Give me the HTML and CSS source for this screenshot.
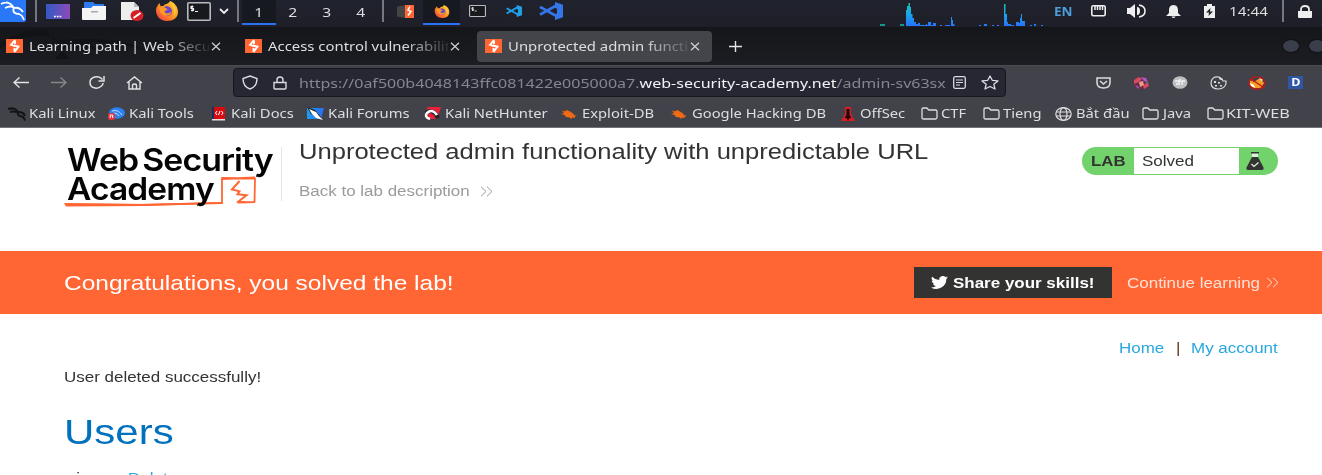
FILE: index.html
```html
<!DOCTYPE html>
<html lang="en">
<head>
<meta charset="utf-8">
<title>Unprotected admin functionality with unpredictable URL</title>
<link rel="stylesheet" href="styles.css">
</head>
<body>
<svg class="defs" aria-hidden="true">
  <defs>
    <linearGradient id="blue" x1="0" x2="1"><stop offset="0" stop-color="#1b9df0"/><stop offset="1" stop-color="#2a6cf5"/></linearGradient>
    <linearGradient id="violet" x1="0" x2="1"><stop offset="0" stop-color="#3459c4"/><stop offset="1" stop-color="#8b4bb8"/></linearGradient>
    <linearGradient id="load" x1="0" y1="0" x2="0" y2="1"><stop offset="0" stop-color="#14c8a8"/><stop offset=".4" stop-color="#18a8e8"/><stop offset="1" stop-color="#2a66ff"/></linearGradient>
    <linearGradient id="flame" x1="1" y1="0" x2="0" y2="1"><stop offset="0" stop-color="#ffd83a"/><stop offset=".5" stop-color="#ff9420"/><stop offset="1" stop-color="#f0304c"/></linearGradient>
  </defs>
  <symbol id="burp" viewBox="0 0 17 14" preserveAspectRatio="none"><path fill="#ff6633" d="M0 0h17v14H0z"/><path fill="none" stroke="#fff" stroke-width="1.900" d="M9 1L5 5.800l4 1.400M8 6.500l4.500 1L8.500 13M9 1.500v3.500M8.500 9v4"/></symbol>
  <symbol id="x" viewBox="0 0 10 9" preserveAspectRatio="none"><path stroke="#d2d2d4" stroke-width="1.200" d="M1 .8l8 7.400M9 .8L1 8.200"/></symbol>
  <symbol id="fox" viewBox="0 0 24 20" preserveAspectRatio="none"><path fill="url(#flame)" d="M1 9C1 6 3 4 4.500 2l1 3h3C10 2 13 4 15 0c5 2 8 6 8 11 0 6-5 9-11 9S1 16 1 9z"/><path fill="#6b46c8" d="M9 6c4-2 9 1 8 6-1 3-7 4-9 1-2-2-2-5 1-7z"/><path fill="#ff9a26" d="M4 6l5 0 4 2.500c-2 0-2 2-4 2 2 3 5 2 8 0-1 5-10 6-12 0z"/><path fill="#ffd440" d="M15 1c6 4 7 9 4 14 1-5 0-10-4-14z"/></symbol>
  <symbol id="term" viewBox="0 0 24 19" preserveAspectRatio="none"><rect x=".8" y=".8" width="22.400" height="17.400" rx="1" fill="#17191c" stroke="#b9babd" stroke-width="1.600"/><path fill="none" stroke="#eee" stroke-width="1.200" d="M6.500 4.500H4v2h2.500v2H4M5.200 3.500v6M8 9.500h3"/></symbol>
  <symbol id="code" viewBox="0 0 24 20" preserveAspectRatio="none"><path fill="none" stroke="currentColor" stroke-width="3" d="M1 5.500L18 16M1 14L18 3.500"/><path fill="currentColor" d="M16 0l8 3v14l-8 3V13.500l2-1V7.500l-2-1z"/></symbol>
  <symbol id="folder" viewBox="0 0 17 13" preserveAspectRatio="none"><path fill="none" stroke="#dedee0" stroke-width="1.300" d="M1 10.500V2.300Q1 1 2.500 1h3.300l2 2h6.700Q16 3 16 4.300v6.200q0 1.500-1.500 1.500h-12Q1 12 1 10.500z"/></symbol>
  <symbol id="bug" viewBox="0 0 16 10" preserveAspectRatio="none"><path fill="#f06a14" d="M1 1.500l3 1L6 1l3 1.500 3 2 1 1.500 3 1-2.500.5L14 9l-3-.5-.5 1.500-2-1.500L5 8 3.500 6 0 5l3-.8z"/></symbol>
  <symbol id="dragon" viewBox="0 0 18 14" preserveAspectRatio="none"><path fill="none" stroke="currentColor" stroke-width="2" d="M0 2c5-2 8 0 10 3 2 0 5 0 7 3M2 5c3-1 6 0 8 0-1 3 1 4 4 4.500 2 .5 2 2 3 4M1 1.500l3 .5M12 5c3 1 3 1 5 4"/></symbol>
  <symbol id="more" viewBox="0 0 13 11" preserveAspectRatio="none"><path fill="none" stroke="currentColor" d="M1 .7l5 4.800-5 4.800M7 .7l5 4.800-5 4.800"/></symbol>
</svg>

<div class="panel">
  <svg class="kali" viewBox="0 0 26 22"><path fill="#2878f8" d="M0 0h26v20q0 2-2 2H0z"/><path fill="none" stroke="#fff" stroke-width="1.800" d="M1 4c6-3 10-1 13 4 4-1 7 1 9 4M5 8c4-2 7-2 9 0-2 4 1 6 5 6 3 1 4 3 5 6M6 2l5 2"/></svg>
  <i class="sep"></i>
  <svg width="24" height="15" viewBox="0 0 24 15"><path fill="url(#violet)" d="M0 0h24v15H0z"/><path stroke="#fff" stroke-width="1.300" stroke-dasharray="1.800 1" d="M8 12.500h8"/></svg>
  <svg width="24" height="18" viewBox="0 0 24 18"><path fill="#2d7bf0" d="M2 0h9l2 2h9v8H2z"/><path fill="#f4f4f4" d="M0 6h9l2-2h13v13q0 1-1 1H1q-1 0-1-1z"/><path fill="#aaa" d="M9 9h7v1.500H9z"/></svg>
  <svg width="23" height="20" viewBox="0 0 23 20"><path fill="#ededed" d="M0 1h13l5 5v13H0z"/><path fill="#bbb" d="M13 1v5h5z"/><ellipse cx="16" cy="14.500" rx="6.500" ry="5.500" fill="#d42024"/><path stroke="#fff" stroke-width="2" d="M12.500 17l7-5"/></svg>
  <svg width="24" height="20"><use href="#fox"/></svg>
  <svg width="24" height="19"><use href="#term"/></svg>
  <svg width="10" height="6" viewBox="0 0 10 6"><path fill="none" stroke="#eee" stroke-width="1.800" d="M1 1l4 4 4-4"/></svg>
  <i class="sep"></i>
  <b class="space on"><span class="t">1</span></b>
  <b class="space"><span class="t">2</span></b>
  <b class="space"><span class="t">3</span></b>
  <b class="space"><span class="t">4</span></b>
  <i class="sep"></i>
  <svg width="17" height="13" viewBox="0 0 17 13"><path fill="#444" d="M0 1.500L9 0v13l-9-1.500z"/><path fill="#ff6633" d="M8 0h9v13H8z"/><path fill="none" stroke="#fff" stroke-width="1.500" d="M13 1.500l-2 3.500 3 1.500-3 4"/></svg>
  <b class="space on task"><svg width="16" height="13"><use href="#fox"/></svg></b>
  <svg width="17" height="12"><use href="#term"/></svg>
  <svg class="cyan" width="16" height="12"><use href="#code"/></svg>
  <svg class="azure" width="24" height="18"><use href="#code"/></svg>
  <svg class="graph" width="164" height="24" viewBox="0 0 164 24"><path fill="url(#load)" d="M26 24V8h1V4h1.500V1H30v4h1v7h1.500v4H34v4h2v2h2v-1h2v2h6v-1h1v1h1v-3h3v3h2v-2h3v3h4v-1h2v1h3v-1h5v1h1v-9h1v3h1v4h1.500v2H90v2h5v1zM124 24V2h1.500v10H127v8h1v2h3v1h3v1h2v-4h3v1h1v-5h1v-4h1v7h3v5h1v3zM99 23h2v1h-2zM104 22h3v2h-3zM112 23h2v1h-2zM117 23h2v1h-2zM150 23h2v1h-2zM154 22h2v2h-2zM161 23h2v1h-2z"/><path fill="#13998a" d="M0 22h5v2H0zM20 22h4v2h-4z"/></svg>
  <span class="t lang">EN</span>
  <svg width="15" height="12" viewBox="0 0 15 12"><rect x=".8" y=".8" width="13.400" height="10" rx="1.500" fill="none" stroke="#eee" stroke-width="1.600"/><path stroke="#eee" stroke-width="1.500" d="M4 1v4M6.500 1v4M9 1v4M11.500 1v4"/></svg>
  <svg width="19" height="14" viewBox="0 0 19 14"><path fill="#eee" d="M0 4h3l5-4v14L3 10H0zM10 3q3 0 3 4t-3 4z"/><path fill="none" stroke="#eee" stroke-width="1.600" d="M12 1q6 1 6 6t-6 6"/></svg>
  <svg width="15" height="13" viewBox="0 0 15 13"><path fill="#eee" d="M7.500 0C4 0 3 3 3 5v3l-3 3h15l-3-3V5c0-2-1-5-4.500-5zM5.500 11.500h4q-.5 1.500-2 1.500t-2-1.500z"/></svg>
  <svg width="11" height="14" viewBox="0 0 11 14"><path fill="#eee" d="M0 2h3V0h5v2h3v12H0z"/><path fill="#1f212b" d="M6.500 4L2 8.500h3L4.500 12 9 7.500H6z"/></svg>
  <span class="t clock">14:44</span>
  <i class="sep"></i>
  <svg width="14" height="13" viewBox="0 0 14 13"><path fill="#eee" d="M0 6h14v6q0 1-1 1H1q-1 0-1-1z"/><path fill="none" stroke="#eee" stroke-width="1.800" d="M3 6V4.500Q3 1 7 1t4 3.500V6"/></svg>
</div>

<div class="tabs">
  <svg class="wing" viewBox="0 0 190 38"><path fill="#121317" d="M0 16C20 4 38 1 46 2l8 11 32-1c30 0 50 5 62 13-22-8-40-10-60-10l12 10-16-6 3 9-18-12-14 16h14l-16-23C30 8 18 10 0 22z"/></svg>
  <div class="tab"><svg width="17" height="14"><use href="#burp"/></svg><div class="fade"><span class="t">Learning path | Web Secur</span></div><svg width="10" height="9"><use href="#x"/></svg></div>
  <div class="tab"><svg width="17" height="14"><use href="#burp"/></svg><div class="fade"><span class="t">Access control vulnerabilit</span></div><svg width="10" height="9"><use href="#x"/></svg></div>
  <div class="tab current"><svg width="17" height="14"><use href="#burp"/></svg><div class="fade"><span class="t">Unprotected admin functi</span></div><svg width="10" height="9"><use href="#x"/></svg></div>
  <svg class="plus" width="13" height="11" viewBox="0 0 13 11"><path stroke="#e4e4e6" stroke-width="1.400" d="M0 5.500h13M6.500 0v11"/></svg>
  <i class="dot"></i><i class="dot"></i>
</div>

<div class="tools">
  <svg width="16" height="11" viewBox="0 0 16 11"><path fill="none" stroke="#e2e2e4" stroke-width="1.400" d="M16 5.500H1M6.500 .5L1 5.500l5.500 5"/></svg>
  <svg width="16" height="11" viewBox="0 0 16 11"><path fill="none" stroke="#85868b" stroke-width="1.400" d="M0 5.500h15M9.500 .5l5.500 5-5.500 5"/></svg>
  <svg width="16" height="13" viewBox="0 0 16 13"><path fill="none" stroke="#e2e2e4" stroke-width="1.500" d="M13.500 3.500C9-1.500 1 1 1 6.500S8 14 12.500 10q1.500-1.500 1.700-3M15 0v5H9.500"/></svg>
  <svg width="17" height="14" viewBox="0 0 17 14"><path fill="none" stroke="#e2e2e4" stroke-width="1.400" d="M1 7l7.500-6L16 7M3 6v7h11V6M6.500 13V9.500q0-1.500 2-1.500t2 1.500V13"/></svg>
  <div class="url">
    <svg width="16" height="15" viewBox="0 0 16 15"><path fill="none" stroke="#dcdce0" stroke-width="1.400" d="M8 1l7 2.500C15 9 12.500 12.500 8 14 3.500 12.500 1 9 1 3.500z"/></svg>
    <svg width="14" height="14" viewBox="0 0 14 14"><path fill="none" stroke="#dcdce0" stroke-width="1.400" d="M1 6.500h12V12q0 1-1 1H2q-1 0-1-1zM4 6.500V4q0-3 3-3t3 3v2.500"/></svg>
    <span class="t">https://0af500b4048143ffc081422e005000a7.<em>web-security-academy.net</em>/admin-sv63sx</span>
    <svg width="13" height="13" viewBox="0 0 13 13"><rect x=".7" y=".7" width="11.600" height="11.600" rx="1.500" fill="none" stroke="#dcdce0" stroke-width="1.300"/><path stroke="#dcdce0" d="M3 4h7M3 6.500h7M3 9h4"/></svg>
    <svg width="18" height="15" viewBox="0 0 18 15"><path fill="none" stroke="#dcdce0" stroke-width="1.300" stroke-linejoin="round" d="M9 1l2.300 4.300 5.700.6-4.200 3.300 1.200 4.800-5-2.500-5 2.500 1.200-4.800L1 5.900l5.700-.6z"/></svg>
  </div>
  <svg width="15" height="12" viewBox="0 0 15 12"><path fill="none" stroke="#dcdce0" stroke-width="1.500" d="M1 1h13v4.500Q14 11 7.500 11T1 5.500zM4 4l3.500 3L11 4"/></svg>
  <svg width="17" height="14" viewBox="0 0 17 14"><ellipse cx="8.500" cy="7" rx="8" ry="6.500" fill="#6a2c48"/><path fill="#d84a62" d="M1 4l5-3 3 2-3 3-5 2zM10 9l5-2 1 3-5 3z"/><path fill="#9b60c8" d="M8 1l5 1 2 4-4-1zM2 9l4 2-1 2z"/><path fill="#4ea0a0" d="M12 6l4 1-2 1z"/><path fill="#f09a86" d="M6 6l4-1 1 4-4 2z"/></svg>
  <svg width="16" height="13" viewBox="0 0 16 13"><ellipse cx="8" cy="6.500" rx="7.500" ry="6.300" fill="#bdbec0"/><path fill="none" stroke="#f4f4f4" stroke-width="1.400" d="M3 5h4v4M10 9V5h3M6 8H4M8 3v3"/></svg>
  <svg width="17" height="14" viewBox="0 0 17 14"><path fill="none" stroke="#dcdce0" stroke-width="1.200" d="M9 1C4 0 1 3 1 7s3 6 7.500 6S16 10 16 7V5h-3l-1-2zM9 1l1 2 3 1"/><path fill="#dcdce0" d="M4 5h2v2H4zM8 6h2v1.500H8zM5 9h2v1.500H5zM10 9h2v1.500h-2z"/></svg>
  <svg width="18" height="14" viewBox="0 0 18 14"><path fill="#f59d24" d="M2 4l4 2 6-4 4 5-3 5H5L2 9z"/><path fill="#fff" d="M2 7l4 2 1 3-4-2zM12 2l3 2-2 1z"/><ellipse cx="9" cy="7" rx="8" ry="6.200" fill="none" stroke="#c01818" stroke-width="1.300"/><path stroke="#c01818" stroke-width="1.300" d="M3 3l12 8"/></svg>
  <span class="badge"><span class="t">D</span></span>
</div>

<div class="marks">
  <svg class="ink" width="18" height="14"><use href="#dragon"/></svg><span class="t">Kali Linux</span>
  <svg width="17" height="13" viewBox="0 0 17 13"><ellipse cx="9" cy="6" rx="8" ry="5.800" fill="#2c80f2"/><path fill="none" stroke="#bfe0ff" d="M4 4q6-2 10 4M6 6q4 0 5 3"/><rect y="6" width="7" height="7" rx="2" fill="#e0343c"/><path fill="none" stroke="#fff" d="M2.300 11V8h2.400v3"/></svg><span class="t">Kali Tools</span>
  <svg width="13" height="14" viewBox="0 0 13 14"><path fill="#d80c10" d="M0 0h13v12H0z"/><path fill="#1b2d58" d="M0 0h2v12H0z"/><path fill="#e8dede" d="M0 12h13v1.500H0z"/><path fill="none" stroke="#fff" d="M5 4L3.500 6 5 8M9.500 4L11 6 9.500 8M8 4L6.500 8"/></svg><span class="t">Kali Docs</span>
  <svg width="17" height="13" viewBox="0 0 17 13"><path fill="url(#blue)" d="M0 1h17l-3 11H0z"/><path fill="#222" d="M0 0l8 3 6 7v2L4 7z"/><path fill="#fff" d="M2 2l7 3 3 4 4 4-7-2-4-4z"/></svg><span class="t">Kali Forums</span>
  <svg width="17" height="13" viewBox="0 0 17 13"><path fill="#e8203a" d="M3 0h14l-4 12H4z"/><path fill="none" stroke="#222" stroke-width="4" d="M2 6q7-5 12 5"/><path fill="none" stroke="#fff" stroke-width="2.500" d="M13 8Q8 1 3 6q-3 4 3 6"/></svg><span class="t">Kali NetHunter</span>
  <svg width="16" height="10"><use href="#bug"/></svg><span class="t">Exploit-DB</span>
  <svg width="16" height="10"><use href="#bug"/></svg><span class="t">Google Hacking DB</span>
  <svg width="14" height="14" viewBox="0 0 14 14"><path fill="#e01a20" d="M4 0h6v7l4 7H0l4-7z"/><path fill="#1a0808" d="M5.500 2h3v6l2 3h-2L7 14l-1.500-3h-2l2-3z"/></svg><span class="t">OffSec</span>
  <svg width="17" height="13"><use href="#folder"/></svg><span class="t">CTF</span>
  <svg width="17" height="13"><use href="#folder"/></svg><span class="t">Tieng</span>
  <svg width="17" height="14" viewBox="0 0 17 14"><g fill="none" stroke="#dedee0" stroke-width="1.200"><ellipse cx="8.500" cy="7" rx="7.700" ry="6.300"/><ellipse cx="8.500" cy="7" rx="3.500" ry="6.300"/><path d="M1 5h15M1 9h15"/></g></svg><span class="t">Bắt đầu</span>
  <svg width="17" height="13"><use href="#folder"/></svg><span class="t">Java</span>
  <svg width="17" height="13"><use href="#folder"/></svg><span class="t wide">KIT-WEB</span>
</div>

<header class="head">
  <div class="logo">
    <span class="word">Web Security</span>
    <span class="word second">Academy</span>
    <svg class="scribble" viewBox="0 0 196 32"><path fill="none" stroke="#ff6633" stroke-width="1.800" stroke-linejoin="round" d="M2 28.500l73 .5 83-2V2l33 .5-.5 23.500-17 .5M158 3l33-1.500"/><path fill="#ff6633" d="M0 27l80 1 79-2v1.500L80 30l-78 .5z"/><path fill="none" stroke="#ff6633" stroke-width="2" d="M175.500 5l-7.500 8.500 7.500 1.800-2 3 9 1-8 6.200 7 .7"/></svg>
  </div>
  <div class="title">
    <h2><span class="t">Unprotected admin functionality with unpredictable URL</span></h2>
    <a class="back"><span class="t">Back to lab description</span><svg width="13" height="11"><use href="#more"/></svg></a>
  </div>
  <div class="lab">
    <b class="t">LAB</b>
    <p><span class="t">Solved</span></p>
    <svg width="18" height="18" viewBox="0 0 18 18"><path fill="#d8f3d5" d="M6 1h6v5H6z"/><path fill="#333" d="M5 0h8v1.500H5zM6 5h6l5.500 10.500Q18 18 16 18H2q-2 0-1.500-2.500z"/><path fill="none" stroke="#e4f7e2" stroke-width="1.200" d="M5.500 12l2.500 2.500 4.500-4"/></svg>
  </div>
</header>

<section class="banner">
  <h3><span class="t">Congratulations, you solved the lab!</span></h3>
  <button class="share"><svg width="17" height="13" viewBox="0 0 24 20" preserveAspectRatio="none"><path fill="#fff" d="M24 2.400a10 10 0 0 1-2.800.8A5 5 0 0 0 23.300.5a10 10 0 0 1-3.100 1.200 4.900 4.900 0 0 0-8.400 4.500A14 14 0 0 1 1.700 1a4.900 4.900 0 0 0 1.500 6.600A5 5 0 0 1 1 7c0 2.400 1.600 4.400 3.900 4.900a5 5 0 0 1-2.200.1 4.900 4.900 0 0 0 4.600 3.400A10 10 0 0 1 0 17.500 14 14 0 0 0 21.500 5z"/></svg><span class="t">Share your skills!</span></button>
  <a class="next"><span class="t">Continue learning</span><svg width="13" height="11"><use href="#more"/></svg></a>
</section>

<main class="content">
  <nav><a><span class="t">Home</span></a><i><span class="t">|</span></i><a><span class="t">My account</span></a></nav>
  <p><span class="t">User deleted successfully!</span></p>
  <h1><span class="t">Users</span></h1>
  <div class="row"><span class="t">wiener - </span><a class="t">Delete</a></div>
</main>
</body>
</html>
```

FILE: styles.css
```css
* { box-sizing: border-box; margin: 0; padding: 0; }
html, body { height: 475px; overflow: hidden; }
body { background: #fff; color: #333332; font-family: "Liberation Sans", Arial, sans-serif; }
svg { display: block; }
.defs { position: absolute; width: 0; height: 0; }
.t { display: inline-block; white-space: nowrap; transform: scaleX(var(--stretch, 1.2)); transform-origin: 0 50%; }

.panel, .tabs, .tools, .marks { font-family: "Noto Sans", sans-serif; display: grid; align-items: center; color: #dedee0; }
.panel > *, .marks > *, .tools > * { min-width: 0; }

.panel {
  height: 27px; padding-bottom: 5px; background: linear-gradient(#20222d, #1e1f28);
  grid-template-columns: 35px 11px 36px 39px 34px 32px 32px 18px 5px 34px 34px 34px 38px 15px 26px 46px 37px 33px 341px 174px 37px 36px 39px 38px 25px 53px 16px 24px;
}
.kali { width: 26px; height: 22px; }
.sep { width: 2px; height: 22px; background: #77787d; }
.space { width: 34px; height: 27px; margin-bottom: -5px; display: grid; place-items: center; padding-bottom: 4px; font: 13px "Noto Sans", sans-serif; }
.task { width: 37px; }
.space .t { transform-origin: 50% 50%; }
.on { background: #171920; box-shadow: inset 0 -2px #1e1f28, inset 0 -4px #2a72f5; }
.cyan { color: #209fe6; }
.azure { color: #3475e8; }
.graph { align-self: end; margin-bottom: -4px; }
.lang { color: #4c9ddb; font-weight: 700; font-size: 12.500px; --stretch: 1.08; }
.clock { font-size: 13px; --stretch: 1.17; }

.tabs { position: relative; height: 39px; background: linear-gradient(#15161a, #1c1d22); border-bottom: 1px solid #4b4b50; grid-template-columns: 237px 240px 252px 553px 26px 20px; }
.wing { position: absolute; left: 0; top: 0; width: 190px; height: 38px; }
.tab { position: relative; height: 31px; display: grid; grid-template-columns: 23px 180px 10px; align-items: center; padding-left: 6px; font-size: 13px; --stretch: 1.145; }
.tab + .tab { padding-left: 8px; }
.fade { -webkit-mask-image: linear-gradient(90deg, #000 75%, transparent 103%); mask-image: linear-gradient(90deg, #000 75%, transparent 103%); }
.tab > svg:last-child { margin-left: 2px; }
.current { width: 235px; background: #44454b; border-radius: 4px; }
.dot { width: 18px; height: 14px; border-radius: 50%; background: #393e4a; border: 1px solid #101114; }

.tools { height: 35px; background: #42434a; padding: 0 0 2px 13px; grid-template-columns: 38px 38px 37px 107px 863px 37px 39px 38px 38px 40px 20px; }
.url { width: 773px; height: 29px; background: #262733; border: 1px solid #17181d; border-radius: 4px; display: grid; align-items: center; grid-template-columns: 31px 26px 654px 28px 20px; padding-left: 8px; font-size: 13.200px; --stretch: 1.215; color: #85868e; }
.url em { font-style: normal; color: #f3f3f5; }
.badge { width: 15px; height: 13px; background: #2f56a5; display: grid; place-items: center; font-weight: 700; font-size: 10.500px; line-height: 13px; color: #fff; }
.badge .t { transform-origin: 50% 50%; }

.marks { height: 27px; background: #42434a; border-bottom: 1px solid #707176; padding: 0 0 1px 8px; font-size: 12.300px; grid-template-columns: 21px 79px 21px 83px 19px 76px 21px 96px 21px 116px 21px 89px 21px 149px 19px 61px 20px 42px 20px 52px 21px 66px 21px 44px 19px 96px; }
.wide { --stretch: 1.32; }
.ink { color: #141416; }

.head { height: 122px; display: grid; grid-template-columns: 218px 801px 196px; padding: 19px 0 0 63px; align-items: start; }
.logo { position: relative; height: 60px; }
.word { position: relative; display: block; width: max-content; margin-left: 4px; font: 600 31px/29px Inter, sans-serif; letter-spacing: -.8px; word-spacing: -3.500px; color: #050505; transform: scaleX(1.092); transform-origin: 0 50%; }
.word:first-child { margin-top: -2px; }
.second { z-index: 1; --w: 0; transform: scaleX(1.08); }
.scribble { position: absolute; left: 1px; top: 29px; width: 196px; height: 32px; }
.title { border-left: 1px solid #e4e4e4; height: 54px; padding-left: 17px; }
h1, h2, h3 { font-weight: 400; }
h2 { font-size: 21.300px; line-height: 24px; margin-top: -7px; --stretch: 1.2; }
.back { display: grid; grid-template-columns: 181px 13px; align-items: center; margin-top: 18px; font-size: 14.150px; line-height: 18px; color: #9b9b9b; }
.lab { height: 28px; width: 196px; border-radius: 14px; background: #72d26c; display: grid; grid-template-columns: 43px 105px 18px; align-items: center; padding-left: 9px; font-size: 14px; }
.lab p { background: #fff; height: 26px; line-height: 26px; padding-left: 8px; font-size: 14.200px; }
.lab svg { margin-left: 7px; }

.banner { height: 63px; margin-top: 1px; background: #ff6633; display: grid; grid-template-columns: 850px 213px 151px; align-items: center; padding-left: 64px; color: #fff; }
h3 { font-size: 21px; --stretch: 1.167; }
.share { width: 198px; height: 31px; background: #333332; border: 0; color: #fff; display: grid; grid-template-columns: 22px 1fr; align-items: center; padding-left: 17px; justify-items: start; font: 700 14.150px "Liberation Sans", Arial, sans-serif; }
.next { display: grid; grid-template-columns: 139px 13px; align-items: center; font-size: 14.150px; color: #ffe0d6; }

.content { padding: 25px 0 0 64px; font-size: 14.150px; }
nav { display: grid; grid-template-columns: 57px 15px 90px; margin-left: 1055px; line-height: 18px; color: #29a8e0; }
nav i { font-style: normal; color: #5c3418; }
.content p { margin-top: 11px; line-height: 18px; }
h1 { font-size: 35px; line-height: 40px; margin-top: 26px; color: #0071bc; }
.row { display: grid; grid-template-columns: 64px 100px; margin-top: 17px; line-height: 18px; }
.row a { color: #29a8e0; }
```
